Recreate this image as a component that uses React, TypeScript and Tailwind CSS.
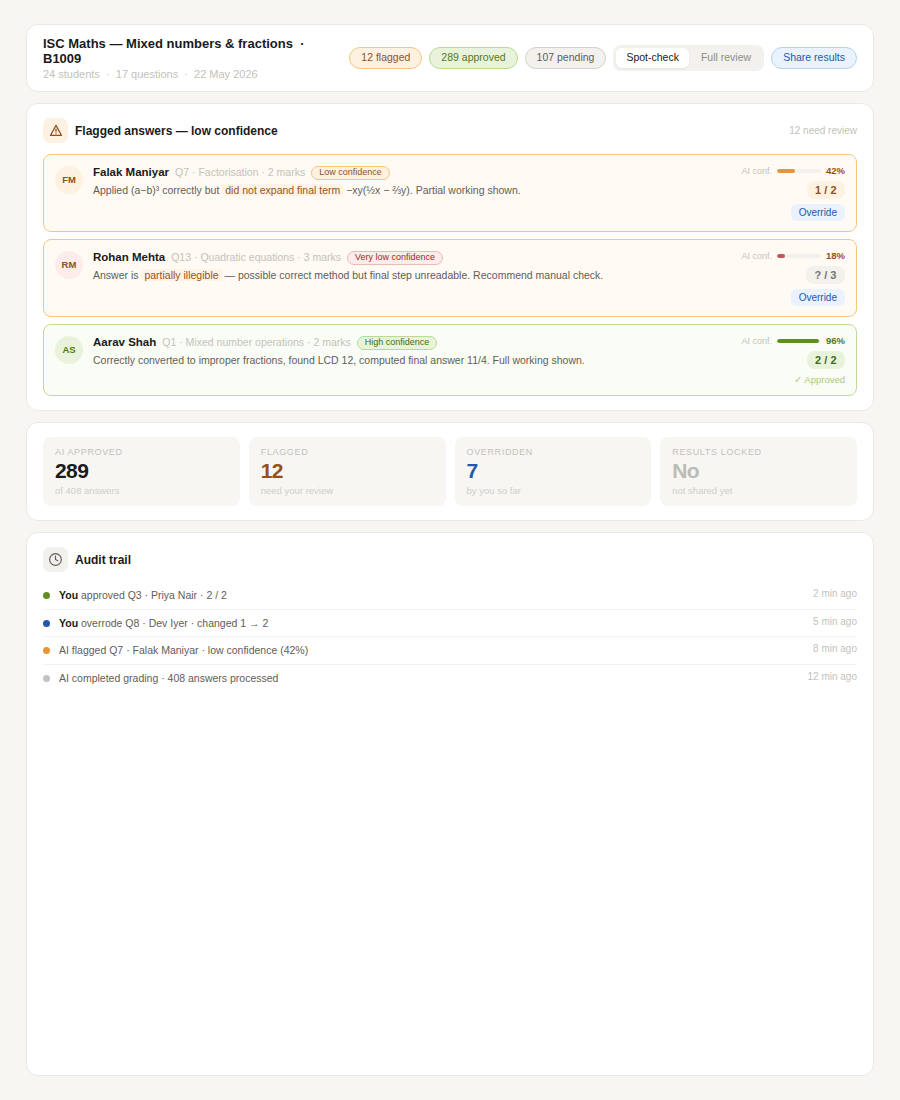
import React from "react";

function Conf({ pct, fill, text }: { pct: number; fill: string; text: string }) {
  return (
    <div className="flex items-center h-[12px]">
      <span className="text-[9px] leading-[12px] text-[#c4c2bb]">AI conf.</span>
      <div className="ml-[5px] w-[44px] h-[4px] rounded-full bg-[#f2f1ed] overflow-hidden">
        <div className={`h-full rounded-full ${fill}`} style={{ width: `${pct}%` }} />
      </div>
      <span className={`w-[24px] text-right text-[9.5px] leading-[12px] font-bold ${text}`}>{pct}%</span>
    </div>
  );
}

type Row = {
  initials: string;
  avatar: string;
  name: string;
  meta: string;
  badge: string;
  badgeCls: string;
  card: string;
  body: React.ReactNode;
  pct: number;
  fill: string;
  pctText: string;
  score: string;
  scoreCls: string;
  approved?: boolean;
};

const Hl = ({ children }: { children: React.ReactNode }) => (
  <span className="px-[3px] rounded-[3px] bg-[#fdf3e6] text-[#9a5216]">{children}</span>
);

const rows: Row[] = [
  {
    initials: "FM",
    avatar: "bg-[#fdf1e2] text-[#94501a]",
    name: "Falak Maniyar",
    meta: "Q7 · Factorisation · 2 marks",
    badge: "Low confidence",
    badgeCls: "bg-[#fdf1e2] border-[#f6c67e] text-[#94501a]",
    card: "bg-[#fffaf3] border-[#f6c67e] h-[78px]",
    body: (
      <>
        Applied (a−b)³ correctly but <Hl>did not expand final term</Hl> −xy(½x − ⅔y). Partial working shown.
      </>
    ),
    pct: 42,
    fill: "bg-[#e8943a]",
    pctText: "text-[#94501a]",
    score: "1 / 2",
    scoreCls: "bg-[#fdf1e2] text-[#94501a]",
  },
  {
    initials: "RM",
    avatar: "bg-[#fdeceb] text-[#94501a]",
    name: "Rohan Mehta",
    meta: "Q13 · Quadratic equations · 3 marks",
    badge: "Very low confidence",
    badgeCls: "bg-[#fdeceb] border-[#efb9b6] text-[#a3262a]",
    card: "bg-[#fffaf3] border-[#f6c67e] h-[78px]",
    body: (
      <>
        Answer is <Hl>partially illegible</Hl> — possible correct method but final step unreadable. Recommend manual check.
      </>
    ),
    pct: 18,
    fill: "bg-[#c0545a]",
    pctText: "text-[#94501a]",
    score: "? / 3",
    scoreCls: "bg-[#f2f1ed] text-[#77756f]",
  },
  {
    initials: "AS",
    avatar: "bg-[#e9f3dc] text-[#4f7a1c]",
    name: "Aarav Shah",
    meta: "Q1 · Mixed number operations · 2 marks",
    badge: "High confidence",
    badgeCls: "bg-[#e9f3dc] border-[#b9dc8e] text-[#3f6b16]",
    card: "bg-[#fafdf5] border-[#bfdd92] h-[72px]",
    body: <>Correctly converted to improper fractions, found LCD 12, computed final answer 11/4. Full working shown.</>,
    pct: 96,
    fill: "bg-[#5f8f22]",
    pctText: "text-[#4f7a1c]",
    score: "2 / 2",
    scoreCls: "bg-[#e9f3dc] text-[#3f6b16]",
    approved: true,
  },
];

const stats = [
  { label: "AI APPROVED", value: "289", cls: "text-[#1a1a1a]", sub: "of 408 answers" },
  { label: "FLAGGED", value: "12", cls: "text-[#94501a]", sub: "need your review" },
  { label: "OVERRIDDEN", value: "7", cls: "text-[#2559a7]", sub: "by you so far" },
  { label: "RESULTS LOCKED", value: "No", cls: "text-[#bdbbb5]", sub: "not shared yet" },
];

const audit = [
  { dot: "bg-[#5f8f22]", you: "You", text: " approved Q3 · Priya Nair · 2 / 2", time: "2 min ago" },
  { dot: "bg-[#2559a7]", you: "You", text: " overrode Q8 · Dev Iyer · changed 1 → 2", time: "5 min ago" },
  { dot: "bg-[#e8943a]", you: "", text: "AI flagged Q7 · Falak Maniyar · low confidence (42%)", time: "8 min ago" },
  { dot: "bg-[#c4c2bb]", you: "", text: "AI completed grading · 408 answers processed", time: "12 min ago" },
];

const cardCls = "bg-white border border-[#eaeae5] rounded-[12px]";

export default function App() {
  return (
    <div className="min-h-screen bg-[#f7f6f2] px-[26px] py-[24px] flex flex-col gap-[11px] font-['Liberation_Sans',Arial,sans-serif]">
      <div className={`${cardCls} h-[68px] px-[16px] flex items-center gap-[7px] shrink-0`}>
        <div className="flex-1 min-w-0 pt-[1px]">
          <div className="text-[13px] leading-[15px] font-bold text-[#1a1a1a] w-[280px]">
            ISC Maths — Mixed numbers &amp; fractions &nbsp;·&nbsp; B1009
          </div>
          <div className="mt-[1px] text-[11px] leading-[15px] text-[#c4c2bb]">24 students &nbsp;·&nbsp; 17 questions &nbsp;·&nbsp; 22 May 2026</div>
        </div>
        <span className="h-[22px] px-[11px] flex items-center rounded-full border border-[#f6c67e] bg-[#fdf1e2] text-[#94501a] text-[10.5px]">12 flagged</span>
        <span className="h-[22px] px-[11px] flex items-center rounded-full border border-[#b9dc8e] bg-[#e9f3dc] text-[#4f7a1c] text-[10.5px]">289 approved</span>
        <span className="h-[22px] px-[11px] flex items-center rounded-full border border-[#d4d2cb] bg-[#f2f1ed] text-[#5f5d58] text-[10.5px]">107 pending</span>
        <div className="h-[26px] p-[3px] flex items-center rounded-[8px] bg-[#f2f1ed]">
          <span className="h-[20px] px-[10px] flex items-center rounded-[6px] bg-white text-[#1a1a1a] text-[10.5px] shadow-[0_1px_2px_rgba(0,0,0,0.06)]">Spot-check</span>
          <span className="h-[20px] pl-[12px] pr-[10px] flex items-center text-[#8e8c86] text-[10.5px]">Full review</span>
        </div>
        <span className="h-[22px] px-[11px] flex items-center rounded-full border border-[#b3d4f2] bg-[#e9f2fd] text-[#2559a7] text-[10.5px]">Share results</span>
      </div>

      <div className={`${cardCls} h-[308px] p-[16px] pt-[14px] shrink-0`}>
        <div className="flex items-center gap-[7px] h-[25px]">
          <div className="w-[25px] h-[25px] rounded-[7px] bg-[#fdf1e2] flex items-center justify-center">
            <svg width="14" height="14" viewBox="0 0 14 14" fill="none" stroke="#94501a" strokeWidth="1.2" strokeLinecap="round" strokeLinejoin="round">
              <path d="M7 1.4 12.5 11.4H1.5L7 1.4Z" />
              <path d="M7 5.2v2.8" />
              <path d="M7 9.7h.01" />
            </svg>
          </div>
          <span className="text-[12px] font-bold text-[#1a1a1a]">Flagged answers — low confidence</span>
          <span className="ml-auto text-[10px] text-[#c4c2bb]">12 need review</span>
        </div>
        <div className="mt-[11px] flex flex-col gap-[7px]">
          {rows.map((r) => (
            <div key={r.initials} className={`relative border rounded-[8px] px-[11px] pt-[10px] flex gap-[10px] ${r.card}`}>
              <div className={`w-[28px] h-[28px] mt-[1px] rounded-full flex items-center justify-center text-[9.5px] font-bold shrink-0 ${r.avatar}`}>{r.initials}</div>
              <div className="flex-1 min-w-0">
                <div className="flex items-center h-[15px]">
                  <span className="text-[11.5px] font-bold text-[#1a1a1a]">{r.name}</span>
                  <span className="ml-[6px] text-[10.5px] text-[#c4c2bb]">{r.meta}</span>
                  <span className={`ml-[6px] h-[14px] px-[7px] flex items-center rounded-full border text-[9px] ${r.badgeCls}`}>{r.badge}</span>
                </div>
                <div className="mt-[3px] text-[10.5px] leading-[15px] text-[#5f5d58]">{r.body}</div>
              </div>
              <div className="flex flex-col items-end shrink-0">
                <Conf pct={r.pct} fill={r.fill} text={r.pctText} />
                <span className={`mt-[4px] h-[18px] px-[8.5px] flex items-center rounded-[8px] text-[11px] font-bold ${r.scoreCls}`}>{r.score}</span>
                {r.approved ? (
                  <span className="mt-[4px] text-[9.5px] text-[#a9cc78]">✓ Approved</span>
                ) : (
                  <span className="mt-[5px] h-[17px] px-[8px] flex items-center rounded-[6px] bg-[#e9f2fd] text-[#2559a7] text-[10px]">Override</span>
                )}
              </div>
            </div>
          ))}
        </div>
      </div>

      <div className={`${cardCls} h-[99px] p-[14px] pl-[16px] pr-[16px] grid grid-cols-4 gap-[9px] shrink-0`}>
        {stats.map((s) => (
          <div key={s.label} className="bg-[#f7f6f2] rounded-[8px] px-[12px] pt-[10px]">
            <div className="text-[9px] leading-[11px] tracking-[0.65px] text-[#c4c2bb]">{s.label}</div>
            <div className={`text-[21px] leading-[26px] font-bold tracking-[-0.6px] ${s.cls}`}>{s.value}</div>
            <div className="mt-[1px] text-[9.5px] leading-[12px] text-[#d0cec8]">{s.sub}</div>
          </div>
        ))}
      </div>

      <div className={`${cardCls} flex-1 p-[16px] pt-[14px]`}>
        <div className="flex items-center gap-[7px] h-[25px]">
          <div className="w-[25px] h-[25px] rounded-[7px] bg-[#f2f1ed] flex items-center justify-center">
            <svg width="14" height="14" viewBox="0 0 24 24" fill="none" stroke="#5f5d58" strokeWidth="2" strokeLinecap="round" strokeLinejoin="round" className="-translate-y-[0.5px] -translate-x-[0.5px]">
              <circle cx="12" cy="12" r="10" />
              <path d="M12 6v6l4 2" />
            </svg>
          </div>
          <span className="text-[12px] font-bold text-[#1a1a1a]">Audit trail</span>
        </div>
        <div className="mt-[10px]">
          {audit.map((a, i) => (
            <div key={a.time} className={`flex items-start h-[27.5px] pt-[6px] ${i < 3 ? "border-b border-[#f2f1ed]" : ""}`}>
              <span className={`w-[7px] h-[7px] mt-[4px] rounded-full shrink-0 ${a.dot}`} />
              <span className="ml-[9px] text-[10.5px] leading-[15px] text-[#5f5d58]">
                {a.you && <b className="font-bold text-[#1a1a1a]">{a.you}</b>}
                {a.text}
              </span>
              <span className="ml-auto -mt-[1px] text-[10px] leading-[13px] text-[#c4c2bb]">{a.time}</span>
            </div>
          ))}
        </div>
      </div>
    </div>
  );
}
